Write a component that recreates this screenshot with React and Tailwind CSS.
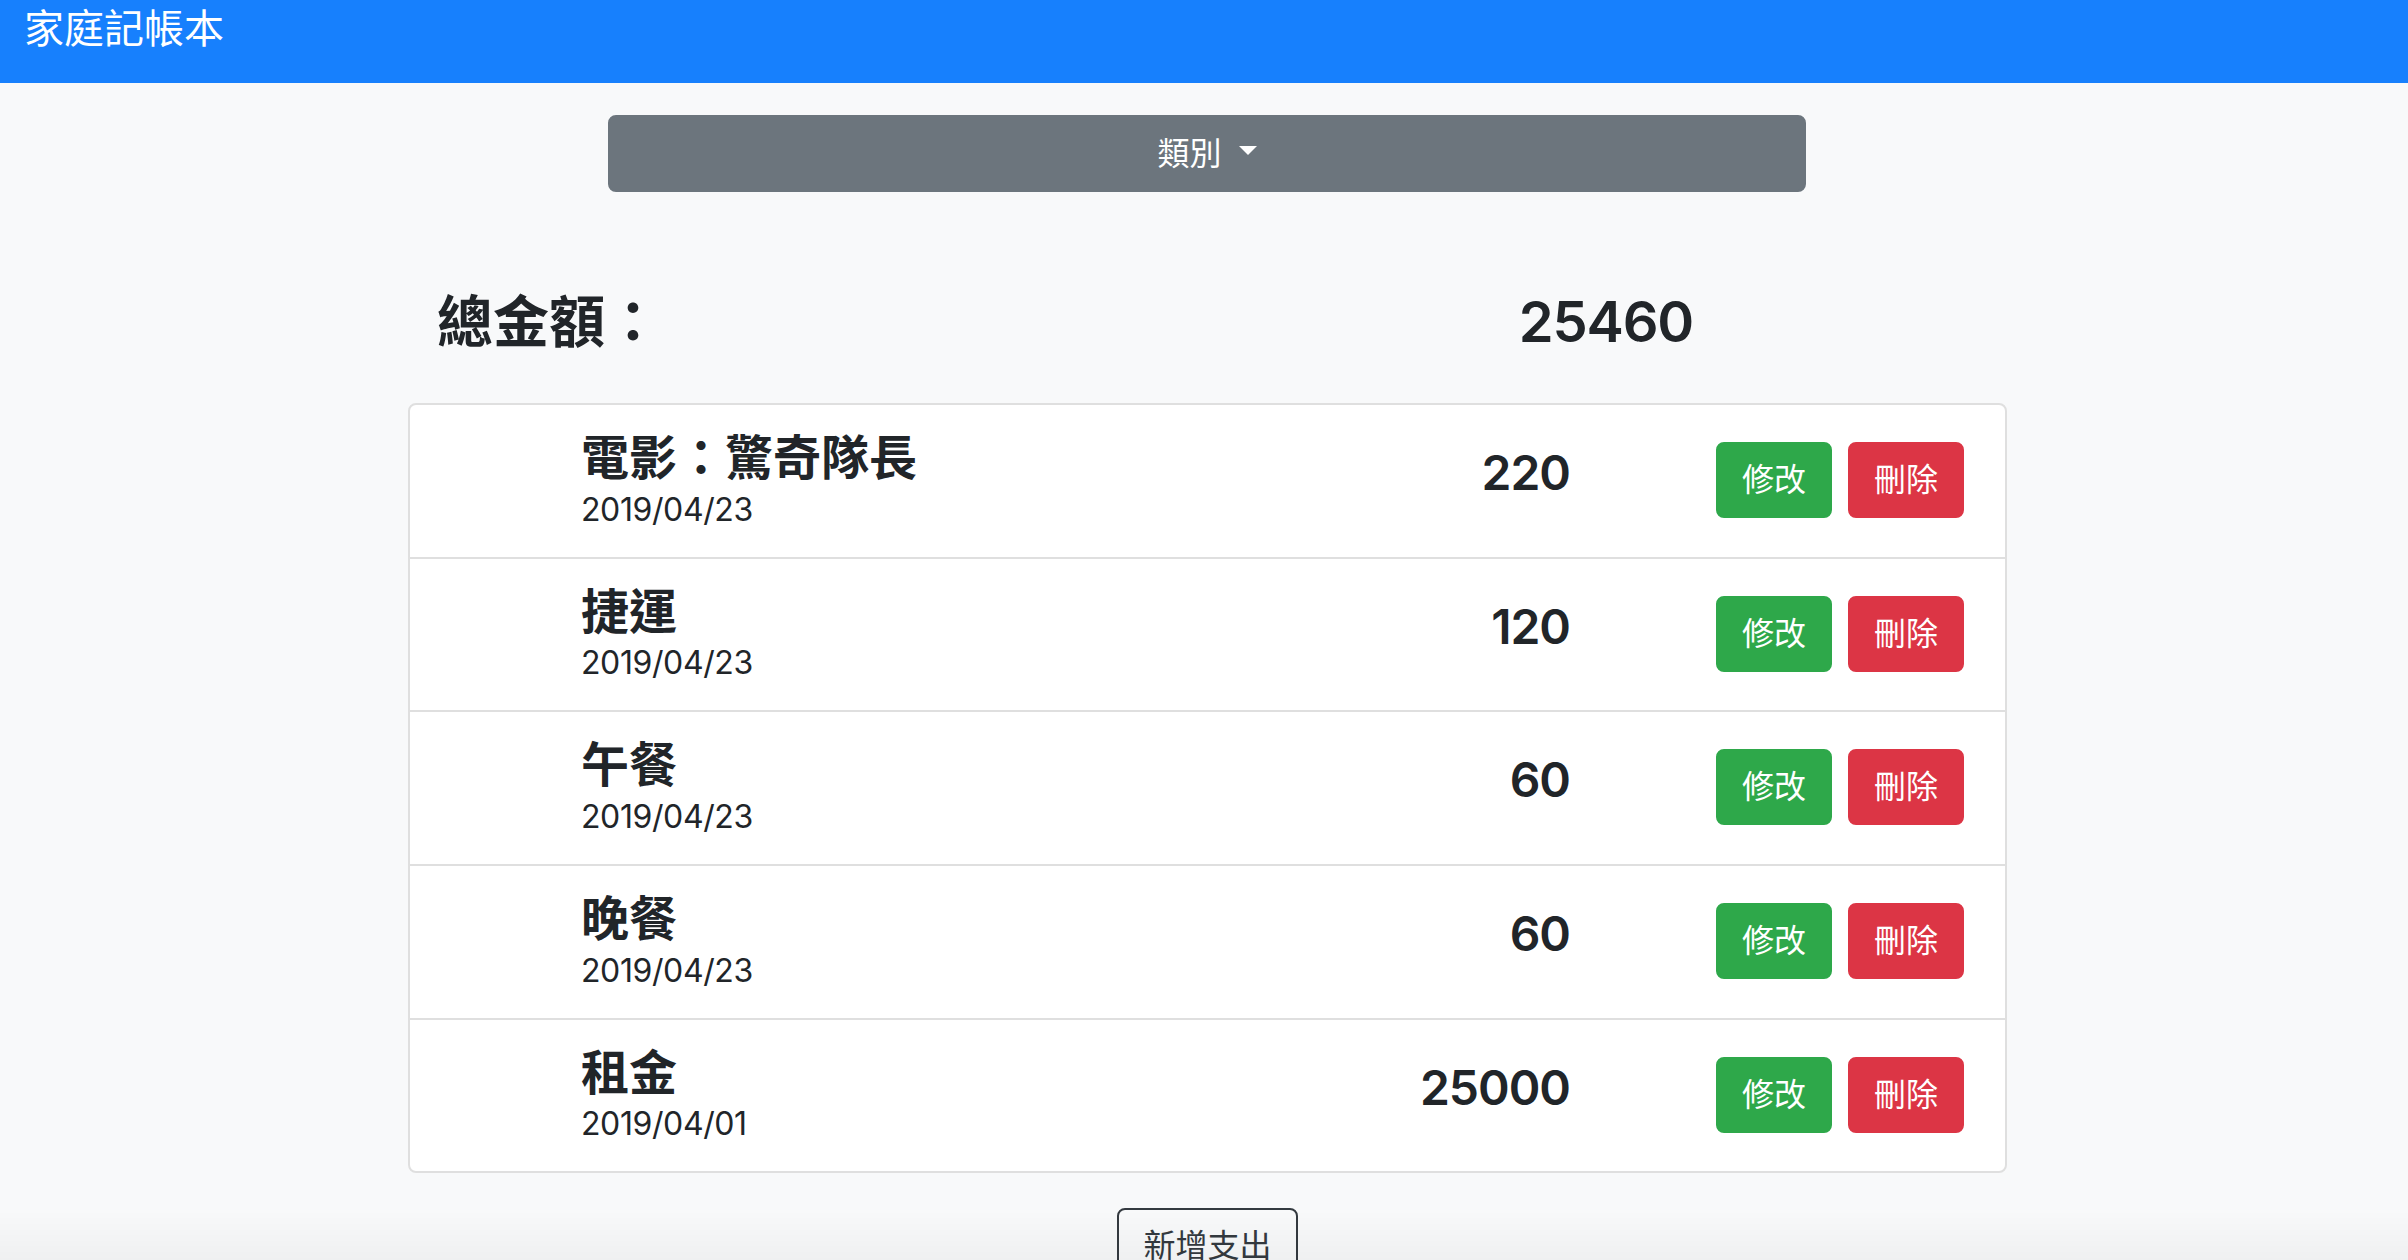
import React from "react";

const items = [
  { title: "電影：驚奇隊長", date: "2019/04/23", amount: 220 },
  { title: "捷運", date: "2019/04/23", amount: 120 },
  { title: "午餐", date: "2019/04/23", amount: 60 },
  { title: "晚餐", date: "2019/04/23", amount: 60 },
  { title: "租金", date: "2019/04/01", amount: 25000 },
];

export default function App() {
  return (
    <div className="w-[2408px] h-[1260px] overflow-hidden bg-[#f8f9fa] text-[#212529] font-['Inter','Noto_Sans_CJK_TC',sans-serif]">
      <nav className="h-[83px] bg-[#1780fd] pl-[24px] pt-[9px]">
        <span className="text-[40px] leading-[40px] text-white">家庭記帳本</span>
      </nav>

      <div className="ml-[408px] w-[1599px]">
        <div className="ml-[200px] mr-[201px] mt-[32px]">
          <button className="w-full h-[77px] rounded-[8px] bg-[#6c757d] border-2 border-[#6c757d] text-white text-[32px] leading-[48px] flex items-center justify-center">
            <span>類別&nbsp;</span>
            <span className="inline-block w-0 h-0 ml-[8px] border-t-[9.6px] border-t-white border-x-[9.6px] border-x-transparent mt-[-6px]"></span>
          </button>
        </div>

        <div className="mt-[97px] ml-[29px] mr-[314px] flex justify-between text-[56px] leading-[67.2px] font-semibold">
          <span>總金額：</span>
          <span className="tracking-[-1.2px]">25460</span>
        </div>

        <div className="mt-[47px] bg-white border-2 border-[#dfdfdf] rounded-[8px]">
          {items.map((it, i) => (
            <div
              key={i}
              className={
                "flex items-start pl-[40px] pr-[41px] py-[24px] " +
                (i < items.length - 1 ? "border-b-2 border-[#dfdfdf]" : "")
              }
            >
              <div className="flex-1 pl-[131px]">
                <div className="text-[48px] leading-[57.6px] font-semibold">{it.title}</div>
                <div className="text-[32px] leading-[46px] tracking-[-0.4px]">{it.date}</div>
              </div>
              <div className="mt-[15px] text-[48px] leading-[57.6px] font-semibold text-right tracking-[-1px]">
                {it.amount}
              </div>
              <div className="ml-[146px] mt-[13px] flex gap-[16px]">
                <button className="w-[116px] h-[76px] rounded-[8px] bg-[#2ea84a] border-2 border-[#2ea84a] text-white text-[32px] leading-[48px]">
                  修改
                </button>
                <button className="w-[116px] h-[76px] rounded-[8px] bg-[#dc3545] border-2 border-[#dc3545] text-white text-[32px] leading-[48px]">
                  刪除
                </button>
              </div>
            </div>
          ))}
        </div>

        <div className="mt-[35px] flex justify-center">
          <button className="px-[24px] py-[12px] rounded-[8px] border-2 border-[#343a40] text-[#343a40] text-[32px] leading-[48px]">
            新增支出
          </button>
        </div>
      </div>

      <div className="pointer-events-none fixed left-0 bottom-0 w-[2408px] h-[50px] bg-linear-to-b from-transparent to-black/[0.035]"></div>
    </div>
  );
}
